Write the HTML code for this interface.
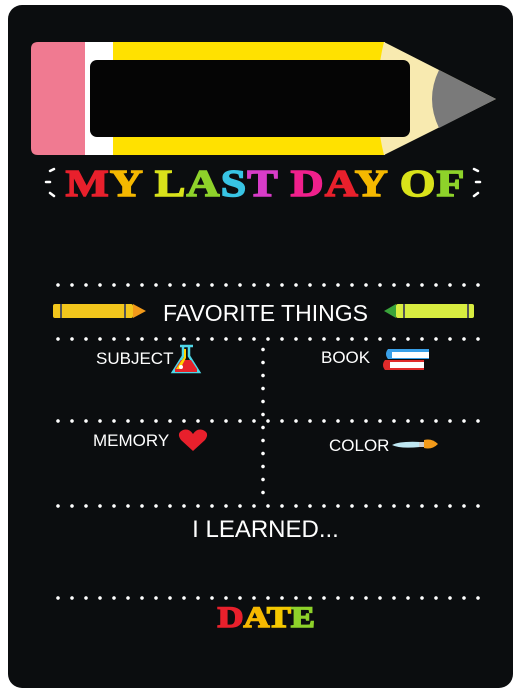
<!DOCTYPE html>
<html><head><meta charset="utf-8"><style>
html,body{margin:0;padding:0;background:#fff;}
body{width:531px;height:695px;position:relative;overflow:hidden;font-family:"Liberation Sans",sans-serif;}
.board{position:absolute;left:8px;top:5px;width:505px;height:683px;background:#0b0d0f;border-radius:14px;}
.dots{position:absolute;height:4px;background-image:radial-gradient(circle,#fff 1.6px,transparent 2px);background-size:14px 4px;}
.vdots{position:absolute;width:4px;background-image:radial-gradient(circle,#fff 1.6px,transparent 2px);background-size:4px 13px;}
.t{position:absolute;color:#fff;white-space:nowrap;}
.title{position:absolute;left:0;width:531px;text-align:center;font-family:"Liberation Serif",serif;font-weight:bold;-webkit-text-stroke:1.5px currentColor;}
.title span{-webkit-text-stroke:1.5px currentColor;}
</style></head><body>
<div class="board"></div>
<svg width="531" height="695" style="position:absolute;left:0;top:0">
  <path d="M38 42 H86 V155 H38 Q31 155 31 148 V49 Q31 42 38 42Z" fill="#f07a91"/>
  <rect x="85" y="42" width="29" height="113" fill="#fff"/>
  <rect x="113" y="42" width="272" height="113" fill="#ffe100"/>
  <path d="M384 42 L496 99 L384 155 Q370 99 384 42Z" fill="#f8eab0"/>
  <path d="M439 70 Q425 99 439 128 L496 99Z" fill="#7a7a7a"/>
  <rect x="90" y="60" width="320" height="77" rx="7" fill="#050505"/>
  <rect x="53" y="304" width="80" height="14" rx="2" fill="#f2c61c"/>
  <rect x="60" y="304" width="2" height="14" fill="#555"/><rect x="124" y="304" width="2" height="14" fill="#555"/>
  <path d="M133 304 L146 311 L133 318Z" fill="#f29a1a"/>
  <rect x="396" y="304" width="78" height="14" rx="2" fill="#d8ec40"/>
  <rect x="403" y="304" width="2" height="14" fill="#555"/><rect x="467" y="304" width="2" height="14" fill="#555"/>
  <path d="M396 304 L384 311 L396 318Z" fill="#3aa33a"/>
  <path d="M180 346 H193 M183 347 V356 L173 372 H199 L189 356 V347" fill="none" stroke="#4fd6e6" stroke-width="2.5"/>
  <path d="M175 369 L181 360 H191 L197 369 V372 H175Z" fill="#e8232a"/>
  <path d="M184 349 V357 L176 369 H180 L186 358 V349Z" fill="#ffd400"/>
  <circle cx="181" cy="367" r="2" fill="#fff"/>
  <path d="M385 360 H424 V370 H385 Q381 365 385 360Z" fill="#e02b2b"/>
  <rect x="390" y="362" width="34" height="6" fill="#fff"/>
  <path d="M388 349 H429 V359 H388 Q384 354 388 349Z" fill="#3aa0e8"/>
  <rect x="392" y="352" width="37" height="6" fill="#fff"/>
  <path d="M193 451 L181 440 Q176 433 183 430 Q189 428 193 434 Q197 428 203 430 Q210 433 205 440 Z" fill="#e8202c"/>
  <path d="M392 445 Q400 441 420 442 L420 447 Q400 449 392 445Z" fill="#bfe7f2"/>
  <rect x="419" y="442" width="5" height="5" fill="#ccc"/>
  <path d="M424 440 Q432 438 438 444 Q432 450 424 448Z" fill="#f29a1a"/>
  <g stroke="#fff" stroke-width="2.5" stroke-linecap="round">
    <line x1="50" y1="171" x2="54" y2="169"/><line x1="46" y1="182" x2="50" y2="182"/><line x1="50" y1="193" x2="54" y2="196"/>
    <line x1="474" y1="169" x2="478" y2="171"/><line x1="476" y1="182" x2="480" y2="182"/><line x1="474" y1="196" x2="478" y2="193"/>
  </g>
</svg>
<div class="title" style="top:162px;font-size:38px;letter-spacing:1px;transform:scaleX(1.2);transform-origin:265px 0;">
<span style="color:#e8202c">M</span><span style="color:#f5b800">Y</span> <span style="color:#d9e21a">L</span><span style="color:#8ed22a">A</span><span style="color:#38c4e4">S</span><span style="color:#d83cc8">T</span> <span style="color:#f0208c">D</span><span style="color:#e8202c">A</span><span style="color:#f5b800">Y</span> <span style="color:#d9e21a">O</span><span style="color:#8ed22a">F</span>
</div>
<div class="dots" style="left:51px;top:283px;width:434px"></div>
<div class="dots" style="left:51px;top:337px;width:434px"></div>
<div class="dots" style="left:51px;top:419px;width:434px"></div>
<div class="dots" style="left:51px;top:504px;width:434px"></div>
<div class="dots" style="left:51px;top:596px;width:434px"></div>
<div class="vdots" style="left:261px;top:343px;height:155px"></div>
<div class="t" style="left:0;width:531px;text-align:center;top:300px;font-size:23px;">FAVORITE THINGS</div>
<div class="t" style="left:96px;top:349px;font-size:17px;">SUBJECT</div>
<div class="t" style="left:321px;top:348px;font-size:17px;">BOOK</div>
<div class="t" style="left:93px;top:431px;font-size:17px;">MEMORY</div>
<div class="t" style="left:329px;top:436px;font-size:17px;">COLOR</div>
<div class="t" style="left:0;width:531px;text-align:center;top:516px;font-size:24px;">I LEARNED...</div>
<div class="title" style="top:601px;font-size:30px;transform:scaleX(1.2);transform-origin:262px 0;"><span style="color:#e8202c">D</span><span style="color:#f5b800">A</span><span style="color:#f5c800">T</span><span style="color:#8ed22a">E</span></div>
</body></html>
